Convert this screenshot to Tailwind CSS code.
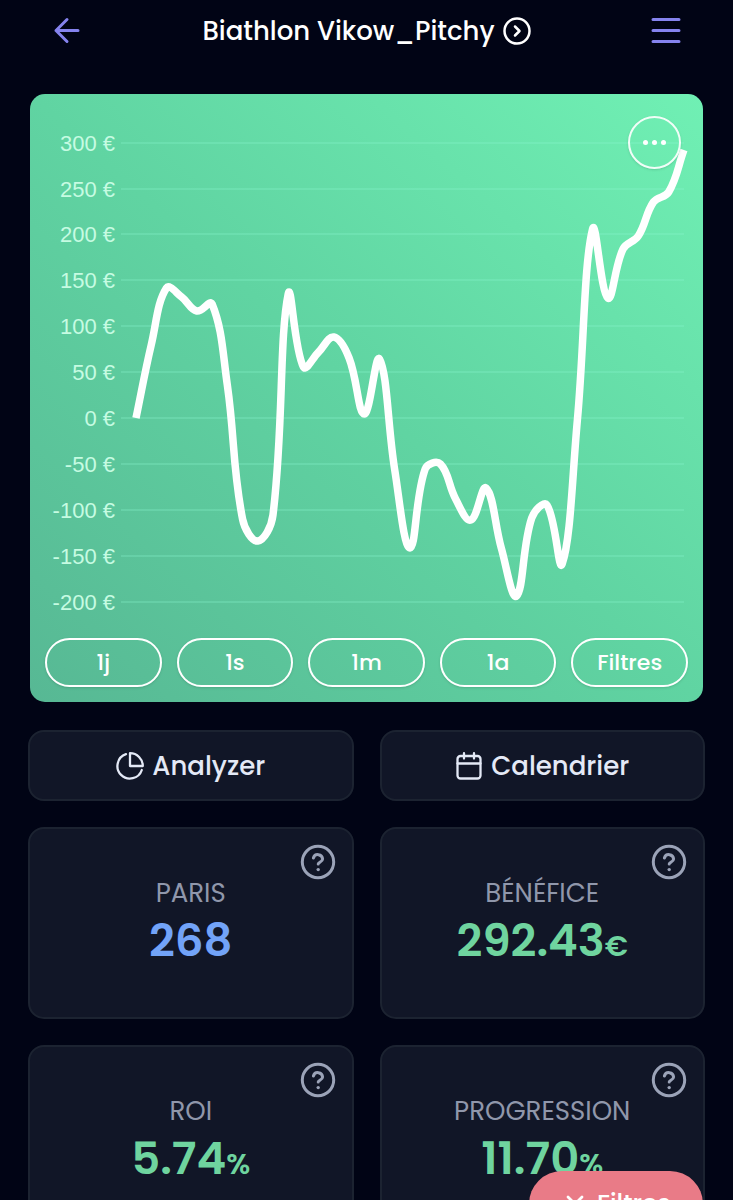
<!DOCTYPE html>
<html lang="fr">

<head>
  <meta charset="UTF-8">
  <meta name="viewport" content="width=device-width, initial-scale=1.0">
  <title>Biathlon Vikow_Pitchy</title>
  <script src="https://cdn.jsdelivr.net/npm/@tailwindcss/browser@4"></script>
</head>

<body class="relative h-screen overflow-hidden bg-[#010415] font-['Poppins','Inter',sans-serif] text-white">
  <svg class="hidden">
    <symbol id="help" viewBox="0 0 36 36" fill="none" stroke="currentColor" stroke-width="3" stroke-linecap="round" stroke-linejoin="round">
      <circle cx="18" cy="18" r="15.7" />
      <path d="M13.4 14a4.7 4.7 0 0 1 9.2 1c0 3-4.4 3.4-4.4 5" />
      <circle cx="18.2" cy="25.6" r="1.7" fill="currentColor" stroke="none" />
    </symbol>
  </svg>

  <header class="flex h-[61px] items-center justify-between px-[52px]">
    <button type="button" aria-label="Retour" class="text-[#8583ee]">
      <svg class="h-8 w-8" viewBox="0 0 32 32" fill="none" stroke="currentColor" stroke-width="3" stroke-linecap="round" stroke-linejoin="round">
        <path d="M26 15.5H4M15 4.5L4 15.5L15 26.5" />
      </svg>
    </button>
    <a href="#" class="flex items-center gap-2 text-[26px] leading-8 font-medium">
      Biathlon Vikow_Pitchy
      <svg class="h-7 w-7" viewBox="0 0 28 28" fill="none" stroke="currentColor" stroke-width="2.5" stroke-linecap="round" stroke-linejoin="round">
        <circle cx="14" cy="14" r="12.5" />
        <path d="M12 9.5L16.5 14L12 18.5" />
      </svg>
    </a>
    <button type="button" aria-label="Menu" class="text-[#8583ee]">
      <svg class="h-8 w-8" viewBox="0 0 32 32" fill="none" stroke="currentColor" stroke-width="3" stroke-linecap="round">
        <path d="M4 4.5H30M4 15.5H30M4 26.5H30" />
      </svg>
    </button>
  </header>

  <main>
    <section class="relative mx-[30px] mt-[33px] rounded-[15px] bg-linear-to-tr from-[#57b894] via-[#60d4a2] to-[#70f0b4]">
      <svg id="chart" class="block w-full" viewBox="30 94 673 544" role="img" aria-label="Bénéfice">
        <g id="grid" stroke="#8af5d2" stroke-opacity=".35" stroke-width="1.6"></g>
        <g id="labels" class="font-['Liberation_Sans',sans-serif] text-[22px]" fill="#c6fbe2" text-anchor="end"></g>
        <path id="line" fill="none" stroke="#fff" stroke-width="7.5" stroke-linejoin="round" />
      </svg>
      <button type="button" aria-label="Options" class="absolute top-[22px] right-[22px] flex h-[53px] w-[53px] items-center justify-center gap-1 rounded-full border-2 border-white/90 shadow-sm">
        <span class="h-[5px] w-[5px] rounded-full bg-white"></span>
        <span class="h-[5px] w-[5px] rounded-full bg-white"></span>
        <span class="h-[5px] w-[5px] rounded-full bg-white"></span>
      </button>
      <div class="grid grid-cols-5 gap-[15px] px-[15px] pb-[15px] text-[22px] leading-7 font-medium">
        <button type="button" class="h-[49px] rounded-full border-2 border-white shadow-sm">1j</button>
        <button type="button" class="h-[49px] rounded-full border-2 border-white shadow-sm">1s</button>
        <button type="button" class="h-[49px] rounded-full border-2 border-white shadow-sm">1m</button>
        <button type="button" class="h-[49px] rounded-full border-2 border-white shadow-sm">1a</button>
        <button type="button" class="h-[49px] rounded-full border-2 border-white shadow-sm">Filtres</button>
      </div>
    </section>

    <div class="mt-7 grid grid-cols-2 gap-[26px] px-7">
      <button type="button" class="flex h-[71px] items-center justify-center gap-2 rounded-2xl border-2 border-[#1c2331] bg-[#111627] text-[26px] leading-8 font-medium text-[#e4e9f6]">
        <svg class="h-7 w-7" viewBox="0 0 28 28" fill="none" stroke="currentColor" stroke-width="2.3" stroke-linecap="round" stroke-linejoin="round">
          <path d="M10 2.2A12.5 12.5 0 1 0 25.8 18" />
          <path d="M14 1.2V14H26.8A12.8 12.8 0 0 0 14 1.2Z" />
        </svg>
        Analyzer
      </button>
      <button type="button" class="flex h-[71px] items-center justify-center gap-2 rounded-2xl border-2 border-[#1c2331] bg-[#111627] text-[26px] leading-8 font-medium text-[#e4e9f6]">
        <svg class="h-7 w-7" viewBox="0 0 28 28" fill="none" stroke="currentColor" stroke-width="2.3" stroke-linecap="round" stroke-linejoin="round">
          <rect x="2.5" y="4" width="23" height="22.5" rx="3" />
          <path d="M2.5 11.5H25.5M9 1.2V6.5M19 1.2V6.5" />
        </svg>
        Calendrier
      </button>

      <article class="relative h-[192px] rounded-2xl border-2 border-[#1c2331] bg-[#111627] pt-12 text-center">
        <button type="button" aria-label="Aide" class="absolute top-[15px] right-4 text-[#9ba3b8]"><svg class="h-9 w-9"><use href="#help" /></svg></button>
        <h2 class="text-[26px] leading-8 text-[#9097ab]">PARIS</h2>
        <p class="text-[45px] leading-[64px] font-semibold text-[#72a3f8]">268</p>
      </article>
      <article class="relative h-[192px] rounded-2xl border-2 border-[#1c2331] bg-[#111627] pt-12 text-center">
        <button type="button" aria-label="Aide" class="absolute top-[15px] right-4 text-[#9ba3b8]"><svg class="h-9 w-9"><use href="#help" /></svg></button>
        <h2 class="text-[26px] leading-8 text-[#9097ab]">BÉNÉFICE</h2>
        <p class="text-[45px] leading-[64px] font-semibold text-[#6fd49f]">292.43<span class="text-[29px]">€</span></p>
      </article>
      <article class="relative h-[192px] rounded-2xl border-2 border-[#1c2331] bg-[#111627] pt-12 text-center">
        <button type="button" aria-label="Aide" class="absolute top-[15px] right-4 text-[#9ba3b8]"><svg class="h-9 w-9"><use href="#help" /></svg></button>
        <h2 class="text-[26px] leading-8 text-[#9097ab]">ROI</h2>
        <p class="text-[45px] leading-[64px] font-semibold text-[#6fd49f]">5.74<span class="text-[29px]">%</span></p>
      </article>
      <article class="relative h-[192px] rounded-2xl border-2 border-[#1c2331] bg-[#111627] pt-12 text-center">
        <button type="button" aria-label="Aide" class="absolute top-[15px] right-4 text-[#9ba3b8]"><svg class="h-9 w-9"><use href="#help" /></svg></button>
        <h2 class="text-[26px] leading-8 text-[#9097ab]">PROGRESSION</h2>
        <p class="text-[45px] leading-[64px] font-semibold text-[#6fd49f]">11.70<span class="text-[29px]">%</span></p>
      </article>
    </div>
  </main>

  <button type="button" class="fixed right-[30px] bottom-[-37px] flex h-[66px] w-[174px] items-center justify-center gap-3 rounded-full bg-[#e97b87] pl-1 text-[25px] leading-8 font-medium">
    <svg class="h-5 w-5" viewBox="0 0 20 20" fill="none" stroke="currentColor" stroke-width="2.8" stroke-linecap="round">
      <path d="M3 3L17 17M17 3L3 17" />
    </svg>
    Filtres
  </button>

  <script>
    const svgNode = (name, attrs, parent) => {
      const node = document.createElementNS('http://www.w3.org/2000/svg', name);
      for (const key in attrs) node.setAttribute(key, attrs[key]);
      document.getElementById(parent).appendChild(node);
      return node;
    };

    for (let i = 0; i <= 10; i++) {
      const y = Math.round(142.6 + i * 45.9);
      svgNode('path', { d: `M121 ${y}H684` }, 'grid');
      svgNode('text', { x: 115, y: y + 8 }, 'labels').textContent = `${300 - i * 50} €`;
    }

    // spline through the cumulated results
    const values = [418, 345, 288, 297, 311, 304, 385, 519, 541, 515, 294, 367, 352, 337, 358, 414, 359, 470, 548, 469, 464,
      499, 520, 488, 548, 596, 518, 505, 564, 420, 229, 298, 249, 236, 202, 192, 150];
    const points = values.map((y, i) => ({ x: 136 + i * 15.22, y }));
    const tension = 0.4;
    const controls = points.map((p, i) => {
      const prev = points[i - 1] || p;
      const next = points[i + 1] || p;
      const before = Math.hypot(p.x - prev.x, p.y - prev.y);
      const after = Math.hypot(next.x - p.x, next.y - p.y);
      const a = tension * before / (before + after);
      const b = tension * after / (before + after);
      return [p.x - a * (next.x - prev.x), p.y - a * (next.y - prev.y), p.x + b * (next.x - prev.x), p.y + b * (next.y - prev.y)];
    });
    let d = `M${points[0].x} ${points[0].y}`;
    for (let i = 1; i < points.length; i++) {
      d += `C${controls[i - 1][2]} ${controls[i - 1][3]} ${controls[i][0]} ${controls[i][1]} ${points[i].x} ${points[i].y}`;
    }
    document.getElementById('line').setAttribute('d', d);
  </script>
</body>

</html>
